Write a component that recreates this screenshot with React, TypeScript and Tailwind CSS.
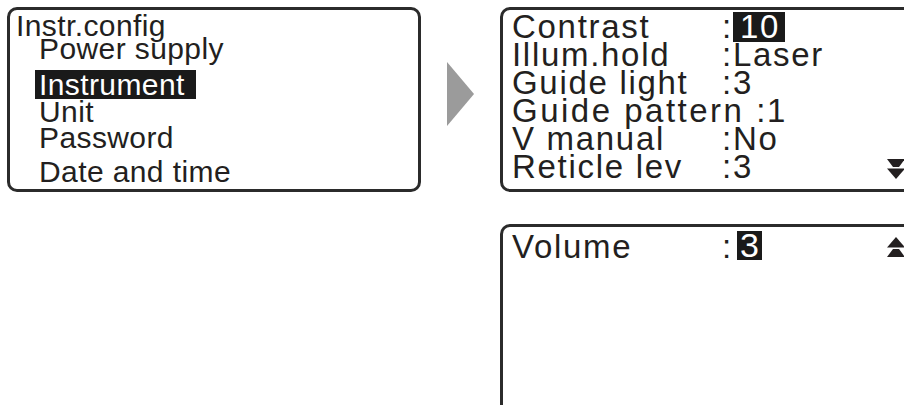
import React from 'react';

const ink = 'text-[#231f20]';

const ScrollMark: React.FC<{ up?: boolean }> = ({ up }) => (
  <svg width="18" height="20" viewBox="0 0 18 20" className={up ? 'rotate-180' : ''}>
    <polygon points="0,0 18,0 12,8 6,8" fill="#231f20" />
    <polygon points="0,9.5 18,9.5 9,20" fill="#231f20" />
  </svg>
);

const menuItems = ['Power supply', 'Instrument', 'Unit', 'Password', 'Date and time'];
// row heights follow the printed spacing of the original screen
const menuHeights = ['h-[34px]', 'h-[29px]', 'h-[26px]', 'h-[34px]', 'h-[25px]'];

const settings: { label: string; value: string; active?: boolean; wide?: boolean }[] = [
  { label: 'Contrast', value: '10', active: true },
  { label: 'Illum.hold', value: 'Laser' },
  { label: 'Guide light', value: '3' },
  { label: 'Guide pattern ', value: '1', wide: true },
  { label: 'V manual', value: 'No' },
  { label: 'Reticle lev', value: '3' },
];

const App: React.FC = () => {
  return (
    <div
      className={`w-[904px] h-[405px] overflow-hidden bg-white ${ink}`}
      style={{ fontFamily: '"Liberation Sans", Arial, sans-serif' }}
    >
      <div className="flex items-start pt-[7px] pl-[7px]">
        {/* Menu screen */}
        <div className="w-[414px] h-[185px] shrink-0 border-[3px] border-[#2b2b2b] rounded-[10px] pt-[3px] pl-[6px] text-[30px] leading-[25px] tracking-[0.4px]">
          <div className="h-[23px] whitespace-nowrap">Instr.config</div>
          <div className="pl-[19px]">
            {menuItems.map((item, i) => (
              <div key={item} className={`${menuHeights[i]} whitespace-nowrap`}>
                {item === 'Instrument' ? (
                  <span className="inline-block leading-[29px] h-[29px] bg-[#1a1a1a] text-white pl-[4px] pr-[11px]">
                    {item}
                  </span>
                ) : (
                  <span className="pl-[4px]">{item}</span>
                )}
              </div>
            ))}
          </div>
        </div>

        {/* Arrow */}
        <div className="shrink-0 mx-[26px] mt-[55px]">
          <svg width="27" height="64" viewBox="0 0 27 64">
            <polygon points="0,0 27,32 0,64" fill="#9b9b9b" />
          </svg>
        </div>

        {/* Settings screens */}
        <div className="flex flex-col gap-[32px] shrink-0">
          <div className="w-[414px] h-[185px] border-[3px] border-[#2b2b2b] rounded-[10px] pt-[3px] pl-[9px] pr-[6px] text-[33px] leading-[28px] tracking-[1.7px]">
            {settings.map((s, i) => (
              <div key={s.label} className="h-[28px] flex items-start whitespace-pre">
                <span className={`min-w-[210px] ${s.wide ? 'tracking-[2.5px]' : ''}`}>{s.label}</span>
                <span>:</span>
                {s.active ? (
                  <span className="inline-block h-[30px] leading-[30px] mt-[-1px] bg-[#1a1a1a] text-white pl-[7px] pr-[5px]">
                    {s.value}
                  </span>
                ) : (
                  <span>{s.value}</span>
                )}
                {i === settings.length - 1 && (
                  <span className="ml-auto mt-[6px]">
                    <ScrollMark />
                  </span>
                )}
              </div>
            ))}
          </div>

          <div className="w-[414px] h-[190px] border-[3px] border-b-0 border-[#2b2b2b] rounded-t-[10px] pt-[6px] pl-[9px] pr-[6px] text-[33px] leading-[28px] tracking-[1.7px]">
            <div className="h-[28px] flex items-start whitespace-pre">
              <span className="min-w-[210px]">Volume</span>
              <span>:</span>
              <span className="inline-block ml-[4px] h-[29px] leading-[29px] mt-[-2px] bg-[#1a1a1a] text-white px-[3px] tracking-normal text-[34px]">
                3
              </span>
              <span className="ml-auto mt-[4px]">
                <ScrollMark up />
              </span>
            </div>
          </div>
        </div>
      </div>
    </div>
  );
};

export default App;
